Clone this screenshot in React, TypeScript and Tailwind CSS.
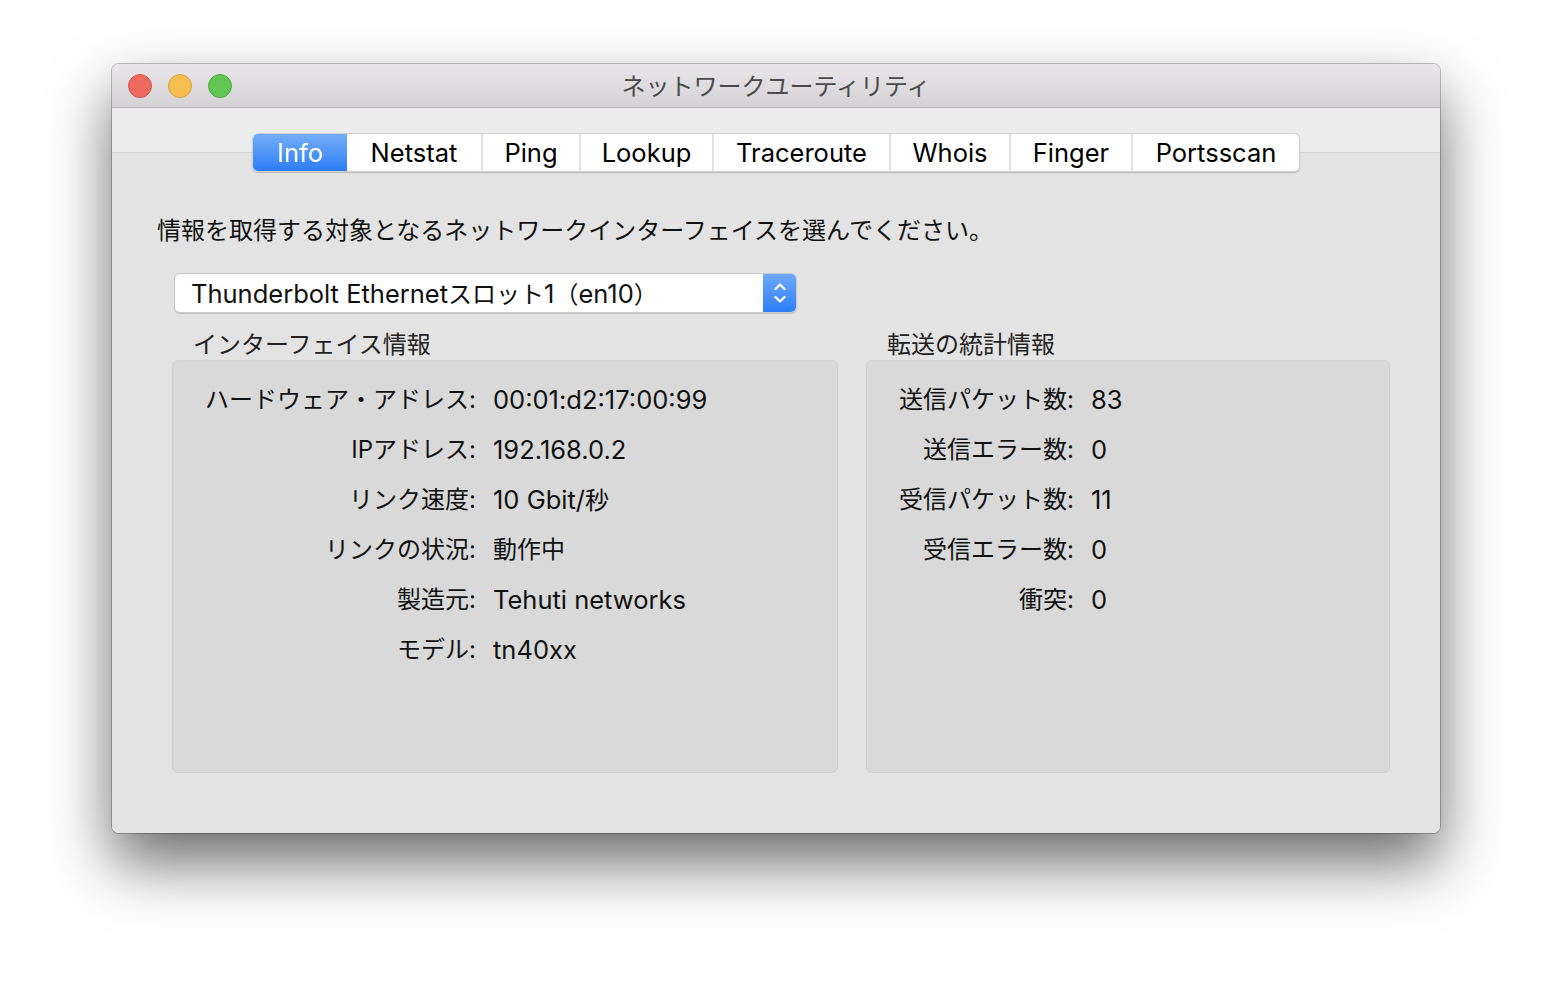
import React from 'react'

const TABS = [
  { label: 'Info', w: 'w-[94px]' },
  { label: 'Netstat', w: 'w-[134px]' },
  { label: 'Ping', w: 'w-[98px]' },
  { label: 'Lookup', w: 'w-[133px]' },
  { label: 'Traceroute', w: 'w-[177px]' },
  { label: 'Whois', w: 'w-[120px]' },
  { label: 'Finger', w: 'w-[122px]' },
  { label: 'Portsscan', w: 'w-[168px]' },
]

const INTERFACE_ROWS = [
  ['ハードウェア・アドレス:', '00:01:d2:17:00:99'],
  ['IPアドレス:', '192.168.0.2'],
  ['リンク速度:', '10 Gbit/秒'],
  ['リンクの状況:', '動作中'],
  ['製造元:', 'Tehuti networks'],
  ['モデル:', 'tn40xx'],
]

const STAT_ROWS = [
  ['送信パケット数:', '83'],
  ['送信エラー数:', '0'],
  ['受信パケット数:', '11'],
  ['受信エラー数:', '0'],
  ['衝突:', '0'],
]

// Latin runs render a bit wider in the original system font, so bump them up
const Mixed = ({ text }: { text: string }) => (
  <>
    {text.split(/([\x20-\x7e]+)/).map((part, i) =>
      /^[\x20-\x7e]+$/.test(part) ? (
        <span key={i} className="text-[25.5px] whitespace-pre">
          {part}
        </span>
      ) : (
        <span key={i}>{part}</span>
      )
    )}
  </>
)

// Traffic light button
const Light = ({ fill, ring }: { fill: string; ring: string }) => (
  <span className={`block w-[24px] h-[24px] rounded-full border ${fill} ${ring}`} />
)

const Chevrons = () => (
  <svg width="14" height="26" viewBox="0 0 14 26" fill="none">
    <path d="M2.5 9 L7 4.5 L11.5 9" stroke="white" strokeWidth="2.2" strokeLinecap="round" strokeLinejoin="round" />
    <path d="M2.5 17 L7 21.5 L11.5 17" stroke="white" strokeWidth="2.2" strokeLinecap="round" strokeLinejoin="round" />
  </svg>
)

const InfoRows = ({ rows, labelCol }: { rows: string[][]; labelCol: string }) => (
  <div className={`grid ${labelCol} gap-x-[17px] pt-[14px]`}>
    {rows.map(([label, value]) => (
      <React.Fragment key={label}>
        <div className="h-[50px] flex items-center justify-end text-[24px] text-[#111] whitespace-nowrap">
          {label}
        </div>
        <div className="h-[50px] flex items-center text-[24px] text-[#111] whitespace-nowrap">
          <span>
            <Mixed text={value} />
          </span>
        </div>
      </React.Fragment>
    ))}
  </div>
)

export default function App() {
  return (
    <div
      className="min-h-[994px] bg-white pt-[64px] pl-[112px]"
      style={{ fontFamily: 'Inter, "Noto Sans CJK JP", sans-serif' }}
    >
      {/* Window */}
      <div className="w-[1328px] h-[769px] rounded-[7px] overflow-hidden flex flex-col shadow-[0_30px_62px_rgba(0,0,0,0.58),0_0_0_1px_rgba(0,0,0,0.24)]">
        {/* Title bar */}
        <div className="relative h-[44px] shrink-0 flex items-center bg-gradient-to-b from-[#e9e7e9] to-[#d4d2d4] border-b border-[#b4b2b4]">
          <div className="flex items-center gap-[16px] pl-[16px]">
            <Light fill="bg-[#ee6a5f]" ring="border-[#d5544a]" />
            <Light fill="bg-[#f6be50]" ring="border-[#d9a33a]" />
            <Light fill="bg-[#62c655]" ring="border-[#50a844]" />
          </div>
          <div className="absolute inset-0 pt-[3px] flex items-center justify-center text-[24px] text-[#4a4a4a] pointer-events-none">
            ネットワークユーティリティ
          </div>
        </div>

        {/* Content */}
        <div className="flex-1 flex flex-col bg-[linear-gradient(to_bottom,#ececec_0,#ececec_44px,#d3d3d3_44px,#d3d3d3_45px,#e3e3e3_45px)]">
          {/* Segmented control */}
          <div className="mt-[25px] self-center flex h-[39px] rounded-[6px] bg-white border border-[#cfcfcf] shadow-[0_1px_1px_rgba(0,0,0,0.18)] overflow-hidden">
            {TABS.map((t, i) => (
              <div
                key={t.label}
                className={`${t.w} flex items-center justify-center pt-[1px] text-[25.5px] ${
                  i === 0
                    ? 'bg-gradient-to-b from-[#74adf8] to-[#2a7df6] text-white'
                    : 'text-black'
                } ${i > 1 ? 'border-l-2 border-[#e2e2e2]' : ''}`}
              >
                {t.label}
              </div>
            ))}
          </div>

          {/* Instruction */}
          <div className="mt-[44px] ml-[45px] text-[24px] leading-[29px] text-[#111]">
            情報を取得する対象となるネットワークインターフェイスを選んでください。
          </div>

          {/* Popup button */}
          <div className="mt-[28px] ml-[62px] w-[623px] h-[40px] flex rounded-[6px] bg-white border border-[#c9c9c9] shadow-[0_1px_1px_rgba(0,0,0,0.15)] overflow-hidden">
            <div className="flex-1 flex items-center pl-[16px] pt-[2px] text-[24px] text-[#111] whitespace-nowrap">
              <span>
                <Mixed text="Thunderbolt Ethernet" />
                スロット
                <Mixed text="1" />
                （
                <Mixed text="en10" />
                ）
              </span>
            </div>
            <div className="w-[33px] flex items-center justify-center bg-gradient-to-b from-[#6ea9f8] to-[#2a7df6]">
              <Chevrons />
            </div>
          </div>

          {/* Boxes */}
          <div className="mt-[17px] ml-[60px] mr-[50px] flex gap-[28px]">
            <div className="w-[666px] flex flex-col">
              <div className="pl-[21px] h-[30px] text-[24px] leading-[30px] text-[#222]">インターフェイス情報</div>
              <div className="h-[413px] rounded-[6px] bg-[#d9d9d9] border border-[#d1d1d1]">
                <InfoRows rows={INTERFACE_ROWS} labelCol="grid-cols-[303px_1fr]" />
              </div>
            </div>
            <div className="flex-1 flex flex-col">
              <div className="pl-[21px] h-[30px] text-[24px] leading-[30px] text-[#222]">転送の統計情報</div>
              <div className="h-[413px] rounded-[6px] bg-[#d9d9d9] border border-[#d1d1d1]">
                <InfoRows rows={STAT_ROWS} labelCol="grid-cols-[207px_1fr]" />
              </div>
            </div>
          </div>
        </div>
      </div>
    </div>
  )
}
